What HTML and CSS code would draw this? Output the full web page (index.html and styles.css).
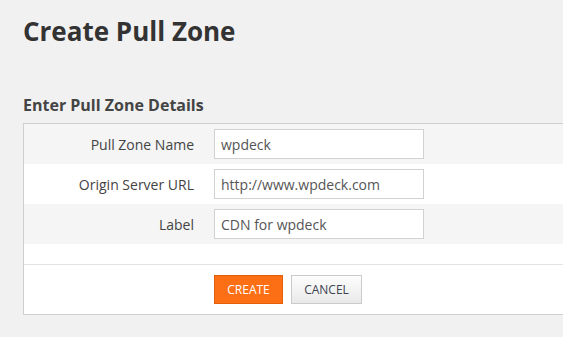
FILE: index.html
```html
<!DOCTYPE html>
<html lang="en">
<head>
  <meta charset="UTF-8" />
  <title>Create Pull Zone</title>
  <link rel="stylesheet" href="styles.css">
</head>
<body>
  <div class="page">
    <h1>Create Pull Zone</h1>

    <h2>Enter Pull Zone Details</h2>

    <div class="panel">
      <div class="form-row">
        <label for="zoneName">Pull Zone Name</label>
        <input type="text" id="zoneName" value="wpdeck" />
      </div>
      <div class="form-row">
        <label for="originUrl">Origin Server URL</label>
        <input type="text" id="originUrl" value="http://www.wpdeck.com" />
      </div>
      <div class="form-row">
        <label for="zoneLabel">Label</label>
        <input type="text" id="zoneLabel" value="CDN for wpdeck" />
      </div>
      <div class="spacer"></div>
      <div class="form-actions">
        <button class="btn btn-create">CREATE</button>
        <button class="btn btn-cancel">CANCEL</button>
      </div>
    </div>
  </div>
</body>
</html>
```

FILE: styles.css
```css
body {
  font-family: 'Open Sans', 'Liberation Sans', sans-serif;
  background-color: #f1f1f1;
  color: #444;
  margin: 0;
  padding: 0;
  overflow: hidden;
}

.page {
  padding: 13px 0 0 23px;
}

h1 {
  font-size: 26px;
  font-weight: bold;
  color: #333;
  margin: 0;
  line-height: 36px;
}

h2 {
  font-size: 16px;
  font-weight: bold;
  color: #444;
  margin: 45px 0 0 0;
  line-height: 22px;
}

.panel {
  margin-top: 7px;
  background-color: #fff;
  border: 1px solid #cfcfcf;
  border-right: none;
}

.form-row {
  display: grid;
  grid-template-columns: 170px 210px;
  column-gap: 20px;
  align-items: center;
  height: 40px;
}

.form-row:nth-child(odd) {
  background-color: #f5f5f5;
}

.form-row label {
  text-align: right;
  font-size: 14px;
  color: #444;
}

.form-row input {
  height: 30px;
  width: 210px;
  box-sizing: border-box;
  border: 1px solid #d2d2d2;
  background-color: #fff;
  padding: 0 6px;
  font-family: 'Open Sans', 'Liberation Sans', sans-serif;
  font-size: 14px;
  color: #555;
  outline: none;
}

.spacer {
  height: 20px;
  border-bottom: 1px solid #e3e3e3;
}

.form-actions {
  display: flex;
  gap: 8px;
  padding: 10px 0 10px 190px;
}

.btn {
  height: 29px;
  font-family: 'Open Sans', 'Liberation Sans', sans-serif;
  font-size: 12px;
  padding: 0;
  cursor: pointer;
}

.btn-create {
  width: 69px;
  background-color: #fc6f14;
  border: 1px solid #e0600c;
  color: #fff;
}

.btn-cancel {
  width: 71px;
  background: linear-gradient(to bottom, #fdfdfd, #e9e9e9);
  border: 1px solid #cbcbcb;
  color: #3d4350;
}
```
